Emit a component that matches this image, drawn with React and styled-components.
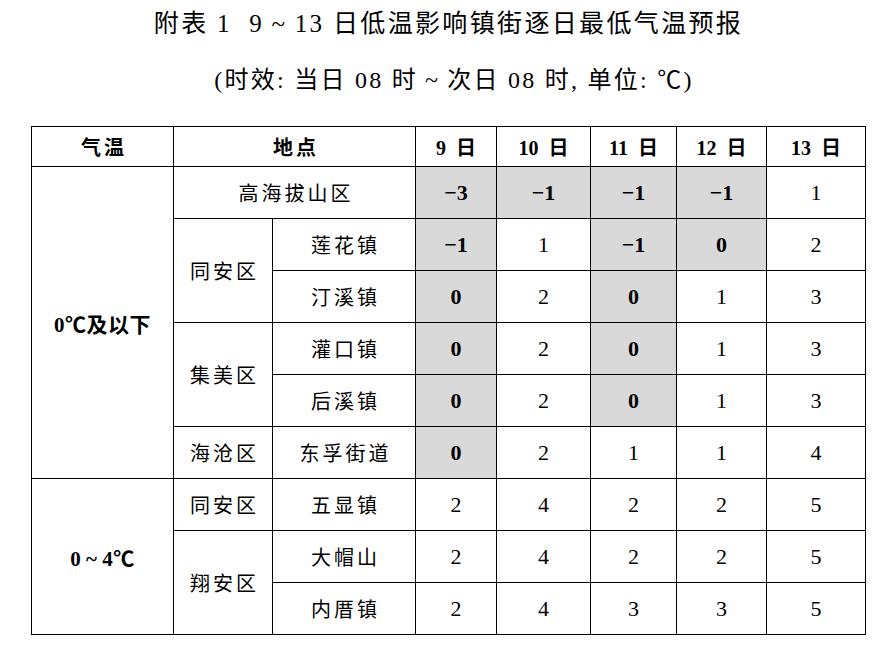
import React from "react";
import styled, { createGlobalStyle } from "styled-components";

const Global = createGlobalStyle`
  html, body { margin: 0; padding: 0; background: #ffffff; }
  body { font-family: "Liberation Serif", "Noto Sans CJK SC", serif; color: #000; }
`;

const Page = styled.div`
  width: 875px;
  height: 645px;
  padding-left: 31px;
  box-sizing: border-box;
  overflow: hidden;
`;

const Sheet = styled.div`
  width: 835px;
  display: flex;
  flex-direction: column;
  align-items: center;
`;

const Title = styled.h1`
  margin: 0;
  height: 46px;
  line-height: 48px;
  font-size: 25px;
  font-weight: 400;
  letter-spacing: 2.35px;
  white-space: pre;
`;

const Subtitle = styled.div`
  margin: 17px 0 0 11px;
  height: 34px;
  line-height: 35px;
  font-size: 24px;
  letter-spacing: 2.25px;
  white-space: pre;
`;

const Table = styled.table`
  margin-top: 29px;
  border-collapse: collapse;
  table-layout: fixed;
  width: 835px;
  border: 1.5px solid #000;
`;

const Cell = styled.td`
  border: 1px solid #000;
  padding: 0 0 0 ${(p) => (p.$wide ? "3px" : "0")};
  text-align: center;
  vertical-align: middle;
  height: ${(p) => (p.$head ? "39px" : "51px")};
  font-size: ${(p) => (p.$num ? "22px" : p.$big ? "21px" : "20px")};
  font-weight: ${(p) => (p.$bold ? 700 : 400)};
  letter-spacing: ${(p) => (p.$wide ? "3px" : p.$big ? "0.5px" : "0")};
  word-spacing: ${(p) => (p.$gap ? "5px" : "0")};
  background: ${(p) => (p.$shade ? "#d9d9d9" : "#ffffff")};
  white-space: pre;
`;

const widths = [142, 99, 143, 81, 94, 86, 90, 99];
const days = ["9 日", "10 日", "11 日", "12 日", "13 日"];

const V = ({ v }) => {
  const shade = typeof v === "string" && v.endsWith("*");
  const text = shade ? v.slice(0, -1) : v;
  return (
    <Cell $num $shade={shade} $bold={shade}>
      {text}
    </Cell>
  );
};

export default function App() {
  return (
    <Page>
      <Global />
      <Sheet>
        <Title>附表 1  9{"\u2009"}~{"\u2009"}13 日低温影响镇街逐日最低气温预报</Title>
        <Subtitle>(时效: 当日 08 时{"\u2009"}~{"\u2009"}次日 08 时, 单位: ℃)</Subtitle>
        <Table>
          <colgroup>
            {widths.map((w, i) => (
              <col key={i} style={{ width: w }} />
            ))}
          </colgroup>
          <tbody>
            <tr>
              <Cell $head $bold $wide>气温</Cell>
              <Cell $head $bold $wide colSpan={2}>地点</Cell>
              {days.map((d) => (
                <Cell $head $bold $gap key={d}>{d}</Cell>
              ))}
            </tr>
            <tr>
              <Cell $bold $big rowSpan={6}>0℃及以下</Cell>
              <Cell $wide colSpan={2}>高海拔山区</Cell>
              {["−3*", "−1*", "−1*", "−1*", "1"].map((v, i) => <V key={i} v={v} />)}
            </tr>
            <tr>
              <Cell $wide rowSpan={2}>同安区</Cell>
              <Cell $wide>莲花镇</Cell>
              {["−1*", "1", "−1*", "0*", "2"].map((v, i) => <V key={i} v={v} />)}
            </tr>
            <tr>
              <Cell $wide>汀溪镇</Cell>
              {["0*", "2", "0*", "1", "3"].map((v, i) => <V key={i} v={v} />)}
            </tr>
            <tr>
              <Cell $wide rowSpan={2}>集美区</Cell>
              <Cell $wide>灌口镇</Cell>
              {["0*", "2", "0*", "1", "3"].map((v, i) => <V key={i} v={v} />)}
            </tr>
            <tr>
              <Cell $wide>后溪镇</Cell>
              {["0*", "2", "0*", "1", "3"].map((v, i) => <V key={i} v={v} />)}
            </tr>
            <tr>
              <Cell $wide>海沧区</Cell>
              <Cell $wide>东孚街道</Cell>
              {["0*", "2", "1", "1", "4"].map((v, i) => <V key={i} v={v} />)}
            </tr>
            <tr>
              <Cell $bold $big rowSpan={3}>0{"\u2009"}~{"\u2009"}4℃</Cell>
              <Cell $wide>同安区</Cell>
              <Cell $wide>五显镇</Cell>
              {["2", "4", "2", "2", "5"].map((v, i) => <V key={i} v={v} />)}
            </tr>
            <tr>
              <Cell $wide rowSpan={2}>翔安区</Cell>
              <Cell $wide>大帽山</Cell>
              {["2", "4", "2", "2", "5"].map((v, i) => <V key={i} v={v} />)}
            </tr>
            <tr>
              <Cell $wide>内厝镇</Cell>
              {["2", "4", "3", "3", "5"].map((v, i) => <V key={i} v={v} />)}
            </tr>
          </tbody>
        </Table>
      </Sheet>
    </Page>
  );
}
